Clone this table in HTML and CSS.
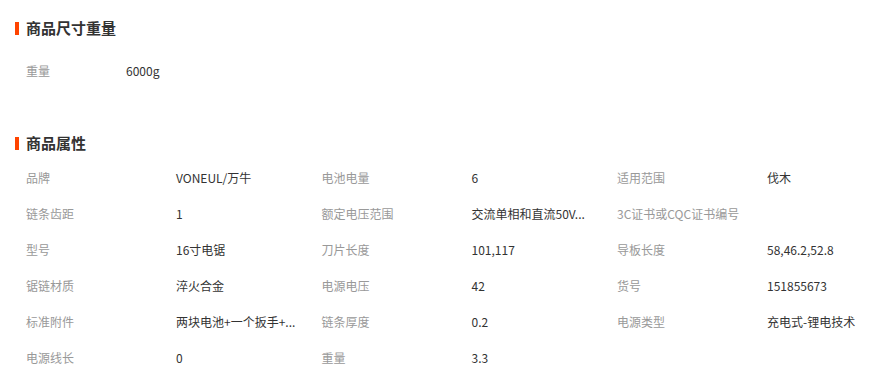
FILE: index.html
```html
<!DOCTYPE html>
<html lang="zh-CN">
<head>
<meta charset="utf-8">
<title>商品属性</title>
<link rel="stylesheet" href="styles.css">
</head>
<body>
<div class="page">
  <section class="block block-size">
    <h2 class="title">商品尺寸重量</h2>
    <div class="grid grid-one">
      <div class="cell"><span class="label">重量</span><span class="value">6000g</span></div>
    </div>
  </section>
  <section class="block block-attr">
    <h2 class="title">商品属性</h2>
    <div class="grid grid-three">
      <div class="cell"><span class="label">品牌</span><span class="value">VONEUL/万牛</span></div>
      <div class="cell"><span class="label">电池电量</span><span class="value">6</span></div>
      <div class="cell"><span class="label">适用范围</span><span class="value">伐木</span></div>

      <div class="cell"><span class="label">链条齿距</span><span class="value">1</span></div>
      <div class="cell"><span class="label">额定电压范围</span><span class="value">交流单相和直流50V...</span></div>
      <div class="cell"><span class="label">3C证书或CQC证书编号</span><span class="value"></span></div>

      <div class="cell"><span class="label">型号</span><span class="value">16寸电锯</span></div>
      <div class="cell"><span class="label">刀片长度</span><span class="value">101,117</span></div>
      <div class="cell"><span class="label">导板长度</span><span class="value">58,46.2,52.8</span></div>

      <div class="cell"><span class="label">锯链材质</span><span class="value">淬火合金</span></div>
      <div class="cell"><span class="label">电源电压</span><span class="value">42</span></div>
      <div class="cell"><span class="label">货号</span><span class="value">151855673</span></div>

      <div class="cell"><span class="label">标准附件</span><span class="value">两块电池+一个扳手+...</span></div>
      <div class="cell"><span class="label">链条厚度</span><span class="value">0.2</span></div>
      <div class="cell"><span class="label">电源类型</span><span class="value">充电式-锂电技术</span></div>

      <div class="cell"><span class="label">电源线长</span><span class="value">0</span></div>
      <div class="cell"><span class="label">重量</span><span class="value">3.3</span></div>
    </div>
  </section>
</div>
</body>
</html>
```
FILE: styles.css
```css
* { box-sizing: border-box; }
html, body { margin: 0; padding: 0; background: #fff; }
body {
  font-family: "Noto Sans CJK SC", "Liberation Sans", sans-serif;
  font-size: 12px;
  color: #333;
}
.page {
  width: 888px;
  overflow: hidden;
  padding-left: 15px;
}
.block-size { padding-top: 18px; }
.block-attr { padding-top: 44px; }
.title {
  display: flex;
  align-items: center;
  margin: 0;
  height: 20px;
  line-height: 20px;
  font-size: 15px;
  font-weight: bold;
  color: #333;
}
.title::before {
  content: "";
  display: block;
  width: 4px;
  height: 13px;
  background: #ff4400;
  margin-right: 7px;
}
.grid { display: grid; padding-left: 11px; }
.grid-one { margin-top: 15px; grid-template-columns: 300px; }
.grid-one .label { width: 100px; }
.grid-three { margin-top: 7px; grid-template-columns: repeat(3, 295.5px); }
.cell {
  display: flex;
  height: 36px;
  line-height: 36px;
  white-space: nowrap;
}
.label {
  width: 150px;
  flex: none;
  color: #999;
}
.value {
  width: 130px;
  white-space: nowrap;
  color: #333;
}
```
